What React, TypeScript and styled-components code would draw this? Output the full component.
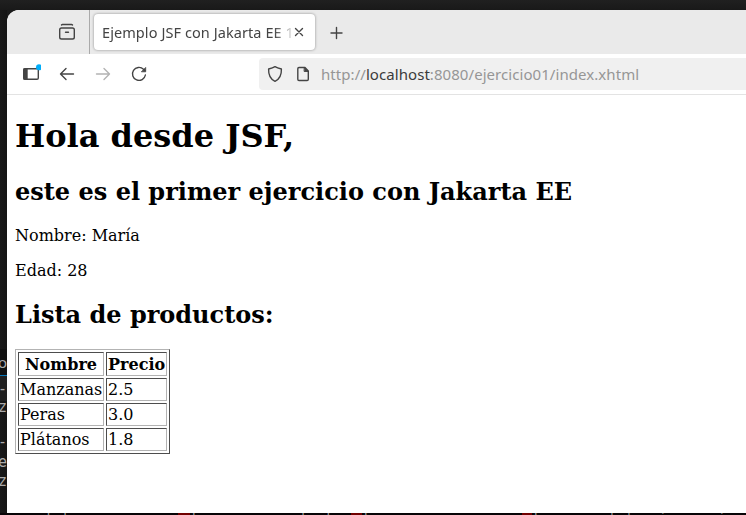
import React from "react";
import styled, { createGlobalStyle, css } from "styled-components";

const GlobalStyle = createGlobalStyle`
  * { box-sizing: border-box; }
  html, body { margin: 0; background: #1b1b1b; overflow: hidden; }
`;

const Desktop = styled.div`
  display: grid;
  grid-template: 10px 503px 2px / 7px 739px;
  width: 746px;
  height: 515px;
  overflow: hidden;
  background: #1b1b1b;
`;

const TopEdge = styled.div`
  grid-column: 1 / -1;
  background: linear-gradient(#202020, #191919);
`;

const EditorEdge = styled.div`
  display: flex;
  flex-direction: column;
  overflow: hidden;
  padding-top: 339px;
  background: linear-gradient(90deg, #191919, #151515);
  font: 15px/20px "DejaVu Sans Mono", monospace;
`;

const EditorLine = styled.div<{ $h: number; $panel?: boolean; $active?: boolean }>`
  display: flex;
  align-items: center;
  justify-content: flex-end;
  flex: none;
  height: ${(p) => p.$h}px;
  color: #aaa;
  white-space: pre;
  ${(p) => p.$panel && css`background: #111; border-bottom: 1px solid #0875b5; font-family: "Noto Sans", sans-serif;`}
  ${(p) => p.$active && css`background: #202020;`}
`;

const Keyword = styled.span`
  color: #b64a20;
`;

const TerminalEdge = styled.div`
  grid-column: 1 / -1;
  display: flex;
  overflow: hidden;
  height: 2px;
  background: #080507;
  color: #999;
  font: 14px/14px "DejaVu Sans Mono", monospace;
  white-space: pre;
  padding-left: 11px;
`;

const TerminalWord = styled.span<{ $w: number; $error?: boolean }>`
  flex: none;
  width: ${(p) => p.$w}px;
  height: 14px;
  overflow: hidden;
  margin-top: -2px;
  background: ${(p) => (p.$error ? "#710000" : "transparent")};
`;

const Browser = styled.main`
  display: flex;
  flex-direction: column;
  overflow: hidden;
  border-top-left-radius: 12px;
  background: #fff;
`;

const TabStrip = styled.header`
  display: flex;
  flex: none;
  height: 44px;
  background: #eaeaea;
  color: #444;
`;

const TabOverview = styled.div`
  display: flex;
  align-items: flex-start;
  width: 83px;
  padding: 13px 0 0 51px;
  border-right: 1px solid #aaa;
`;

const Tab = styled.div`
  display: flex;
  align-items: center;
  width: 221px;
  height: 36px;
  margin: 4px 0 0 4px;
  padding: 0 8px;
  border-radius: 4px;
  background: #fff;
  box-shadow: 0 0 3px rgba(0, 0, 0, 0.4);
`;

const TabTitle = styled.div`
  width: 191px;
  overflow: hidden;
  font: 14.5px/20px "Noto Sans", sans-serif;
  letter-spacing: 0.08px;
  white-space: nowrap;
  mask-image: linear-gradient(90deg, #000 172px, transparent 194px);
`;

const CloseButton = styled.div`
  display: flex;
  flex: none;
`;

const NewTab = styled.div`
  padding: 15px 0 0 14px;
`;

const Toolbar = styled.nav`
  display: flex;
  align-items: center;
  flex: none;
  height: 41px;
  padding: 0 0 1px 14px;
  border-bottom: 1px solid #e3e3e3;
  color: #444;
`;

const ToolButton = styled.div<{ $disabled?: boolean }>`
  display: flex;
  width: 36px;
  color: ${(p) => (p.$disabled ? "#b3b3b3" : "inherit")};
`;

const AddressBar = styled.div`
  display: flex;
  align-items: center;
  flex: 1;
  height: 32px;
  margin-left: 94px;
  padding-left: 6px;
  border-radius: 4px 0 0 4px;
  background: #f0f0f0;
`;

const AddressIcon = styled.div`
  display: flex;
  width: 28px;
`;

const Url = styled.div`
  font: 15px/20px "Noto Sans", sans-serif;
  letter-spacing: 0.06px;
  white-space: nowrap;
  color: #969696;
`;

const Host = styled.span`
  color: #3b3b3b;
`;

const Page = styled.article`
  flex: 1;
  padding: 22px 8px 0;
  color: #000;
  font: 16px/19px "DejaVu Serif", serif;
`;

const Title = styled.h1`
  margin: 0 0 22px;
  font-size: 32px;
  line-height: 38px;
`;

const Subtitle = styled.h2`
  margin: 0 0 20px;
  font-size: 24px;
  line-height: 29px;
`;

const Detail = styled.p`
  margin: 0 0 16px;
  & + h2 { margin-top: 20px; }
`;

const ProductTable = styled.table`
  width: 155px;
  border: 1px solid;
  border-color: #b3b3b3 #4d4d4d #4d4d4d #b3b3b3;
  border-collapse: separate;
  border-spacing: 2px;
  table-layout: fixed;
`;

const cell = css`
  height: 23px;
  padding: 1px;
  border: 1px solid;
  border-color: #4d4d4d #b3b3b3 #b3b3b3 #4d4d4d;
  white-space: nowrap;
`;

const HeadCell = styled.th<{ $w: number }>`
  ${cell}
  width: ${(p) => p.$w}px;
  height: 24px;
`;

const Cell = styled.td`
  ${cell}
`;

const Icon = ({ size = 20, children }: { size?: number; children: React.ReactNode }) => (
  <svg width={size} height={size} viewBox={`0 0 ${size} ${size}`} fill="none" stroke="currentColor" strokeWidth="1.4" strokeLinecap="round" strokeLinejoin="round">
    {children}
  </svg>
);

const products = [
  ["Manzanas", "2.5"],
  ["Peras", "3.0"],
  ["Plátanos", "1.8"],
];

const terminal: { text: string; w: number; error?: boolean }[] = [
  { text: "servlet es con erro", w: 167 },
  { text: "s", w: 12, error: true },
  { text: "[a es oca contexto", w: 161 },
  { text: "c", w: 11, error: true },
  { text: "[a c       es caso", w: 160 },
  { text: "c", w: 10, error: true },
  { text: "[s  a s  | |   i      i", w: 214 },
];

export default function App() {
  return (
    <>
      <GlobalStyle />
      <Desktop>
        <TopEdge />
        <EditorEdge>
          <EditorLine $h={27} $panel>o</EditorLine>
          <EditorLine $h={25} $active><Keyword>o</Keyword>-</EditorLine>
          <EditorLine $h={11}>.z</EditorLine>
          <EditorLine $h={20}> </EditorLine>
          <EditorLine $h={20}>o-</EditorLine>
          <EditorLine $h={19}>e</EditorLine>
          <EditorLine $h={20}>.z</EditorLine>
        </EditorEdge>
        <Browser>
          <TabStrip>
            <TabOverview>
              <Icon size={18}>
                <path d="M3.5 2q.4-.5 1-.5h9q.6 0 1 .5" />
                <rect x="1.7" y="5" width="14.6" height="11" rx="1.8" />
                <path d="M7.5 9.2h3" />
              </Icon>
            </TabOverview>
            <Tab>
              <TabTitle>Ejemplo JSF con Jakarta EE 1</TabTitle>
              <CloseButton>
                <Icon size={12}><path d="M2.5 2.5l7 7M9.5 2.5l-7 7" /></Icon>
              </CloseButton>
            </Tab>
            <NewTab>
              <Icon size={16}><path d="M7.5 2.5v11M2 8h11" /></Icon>
            </NewTab>
          </TabStrip>
          <Toolbar>
            <ToolButton>
              <Icon>
                <rect x="2.7" y="4.7" width="14.6" height="10.6" rx="1.3" />
                <path d="M3 5h3v10H3z" fill="currentColor" />
                <circle cx="18" cy="3.2" r="3" fill="#00adfa" stroke="none" />
              </Icon>
            </ToolButton>
            <ToolButton>
              <Icon><path d="M16.5 10h-13M9 4.5L3.5 10 9 15.5" /></Icon>
            </ToolButton>
            <ToolButton $disabled>
              <Icon><path d="M3.5 10h13M11 4.5l5.5 5.5-5.5 5.5" /></Icon>
            </ToolButton>
            <ToolButton>
              <Icon>
                <path d="M16.4 11A6.5 6.5 0 1 1 14.5 5.2l1.4 1.4" />
                <path d="M16.7 3.8v4h-4z" fill="currentColor" strokeWidth=".8" />
              </Icon>
            </ToolButton>
            <AddressBar>
              <AddressIcon>
                <Icon>
                  <path d="M10 2.7c2 1.3 4 1.8 6.4 2.3.2 5.2-1.4 10-6.4 12.3-5-2.3-6.6-7.1-6.4-12.3C6 4.5 8 4 10 2.7z" />
                </Icon>
              </AddressIcon>
              <AddressIcon>
                <Icon>
                  <path d="M6 3.5h6L15.3 7v8.3a1.2 1.2 0 0 1-1.2 1.2H6a1.2 1.2 0 0 1-1.2-1.2V4.7A1.2 1.2 0 0 1 6 3.5z" />
                  <path d="M11.5 3.8l3.6 3.6h-3.6z" fill="currentColor" strokeWidth="1" />
                </Icon>
              </AddressIcon>
              <Url>http://<Host>localhost</Host>:8080/ejercicio01/index.xhtml</Url>
            </AddressBar>
          </Toolbar>
          <Page>
            <Title>Hola desde JSF,</Title>
            <Subtitle>este es el primer ejercicio con Jakarta EE</Subtitle>
            <Detail>Nombre: María</Detail>
            <Detail>Edad: 28</Detail>
            <Subtitle>Lista de productos:</Subtitle>
            <ProductTable>
              <thead>
                <tr><HeadCell $w={86}>Nombre</HeadCell><HeadCell $w={61}>Precio</HeadCell></tr>
              </thead>
              <tbody>
                {products.map(([name, price]) => (
                  <tr key={name}><Cell>{name}</Cell><Cell>{price}</Cell></tr>
                ))}
              </tbody>
            </ProductTable>
          </Page>
        </Browser>
        <TerminalEdge>
          {terminal.map((part, i) => (
            <TerminalWord key={i} $w={part.w} $error={part.error}>{part.text}</TerminalWord>
          ))}
        </TerminalEdge>
      </Desktop>
    </>
  );
}
